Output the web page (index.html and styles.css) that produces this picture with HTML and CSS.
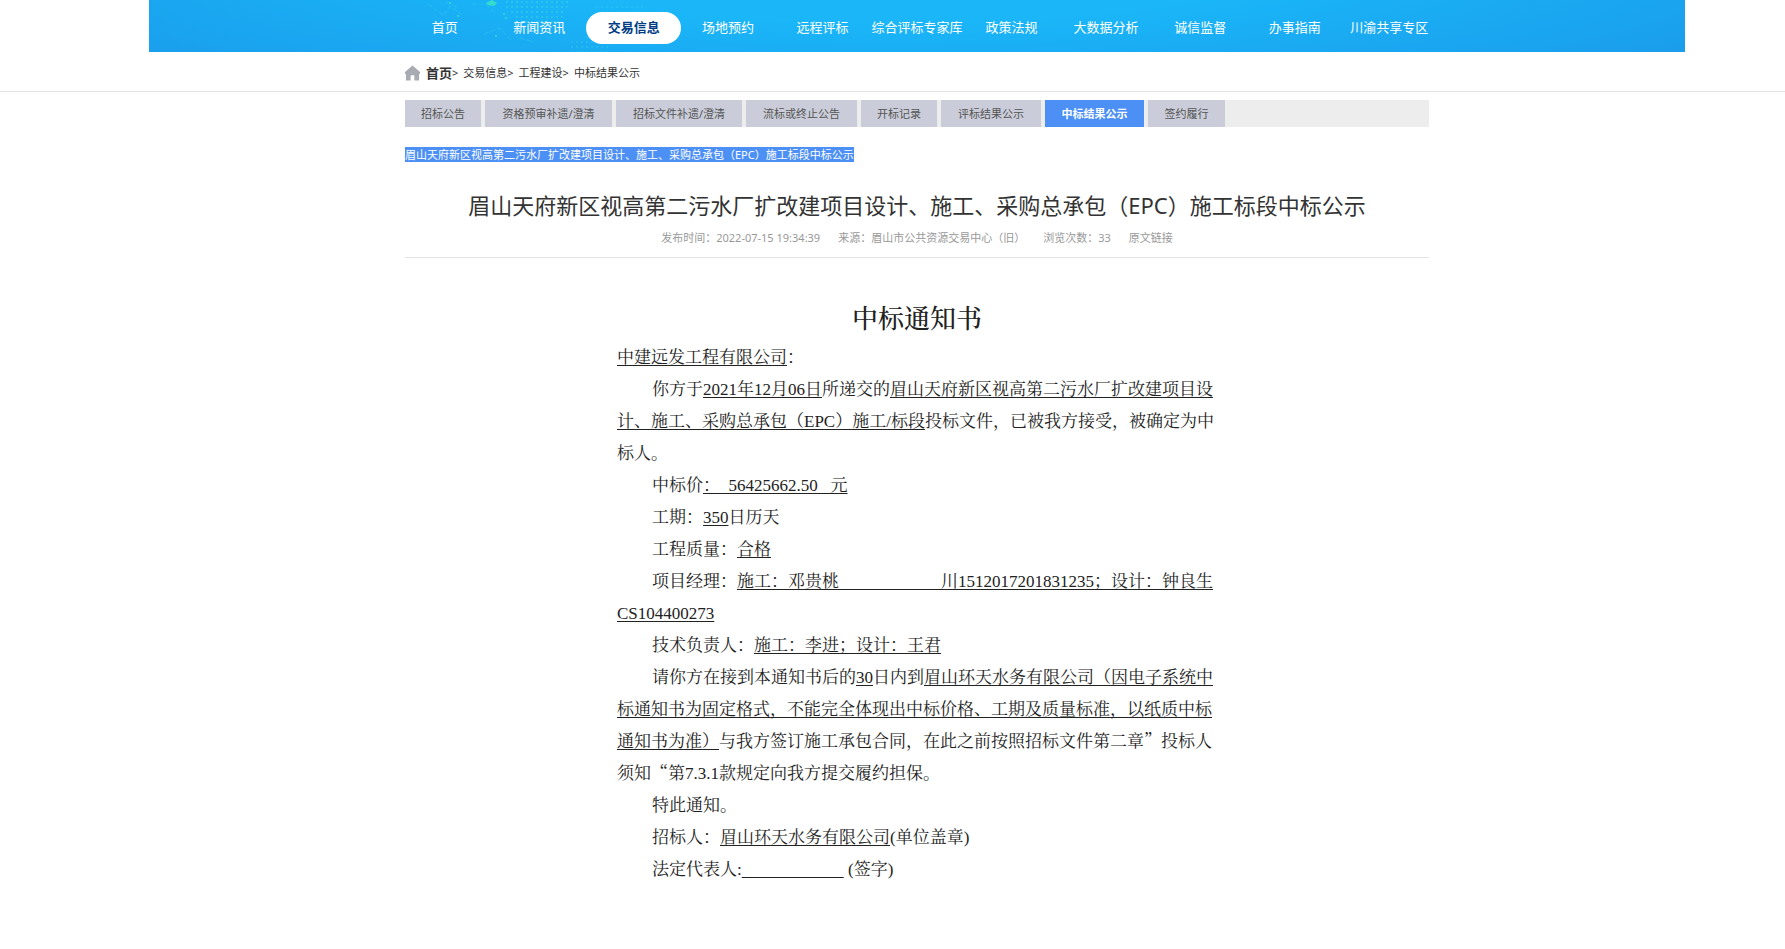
FILE: index.html
```html
<!DOCTYPE html>
<html lang="zh-CN">
<head>
<meta charset="utf-8">
<title>中标结果公示</title>
<link rel="stylesheet" href="styles.css">
</head>
<body>
<header class="banner">
  <svg class="banner-art" viewBox="0 0 300 52" aria-hidden="true">
    <defs>
      <pattern id="dots" width="5" height="5" patternUnits="userSpaceOnUse"><circle cx="2" cy="2" r="1" fill="#2fd0e0"/></pattern>
    </defs>
    <path d="M84 0h66l-4 12-8 12-18 4-18-6-14-8z" fill="url(#dots)" opacity=".8"/>
    <path d="M150 42l20-6 22 4-4 12h-40z" fill="url(#dots)" opacity=".5"/>
    <path d="M172 4l30-2 24 4-6 6h-40z" fill="url(#dots)" opacity=".4"/>
    <g fill="none" stroke="#2fcdea" stroke-width="1" stroke-dasharray="5 2" opacity=".5">
      <path d="M8 4l16 12 6-10 14 10M26 2l12 6M52 4l14 0 10 10M64 34l16-6 12 14M100 38l14 4"/>
    </g>
    <g fill="#35dccb"><path d="M66 3l6-3 5 3-3 3-6-1z"/><circle cx="30" cy="3" r="1"/><circle cx="38" cy="16" r="1"/><circle cx="84" cy="14" r="1"/><circle cx="86" cy="18" r="1"/><circle cx="76" cy="36" r="1"/></g>
  </svg>
  <nav class="nav" aria-label="主导航">
    <a href="#">首页</a>
    <a href="#">新闻资讯</a>
    <a href="#" class="current">交易信息</a>
    <a href="#">场地预约</a>
    <a href="#">远程评标</a>
    <a href="#">综合评标专家库</a>
    <a href="#">政策法规</a>
    <a href="#">大数据分析</a>
    <a href="#">诚信监督</a>
    <a href="#">办事指南</a>
    <a href="#">川渝共享专区</a>
  </nav>
</header>
<div class="crumb-bar">
  <nav class="crumbs wrap" aria-label="当前位置">
    <svg class="home" viewBox="0 0 16 16" aria-hidden="true"><path d="M8 0L0 7v2h1v7h5v-5q2-2 4 0v5h5V9h1V7z" fill="#a9abb3"/></svg>
    <a href="#" class="root">首页</a><span>&gt;</span>
    <a href="#">交易信息</a><span>&gt;</span>
    <a href="#">工程建设</a><span>&gt;</span>
    <a href="#">中标结果公示</a>
  </nav>
</div>
<main>
  <div class="wrap">
    <nav class="tabs" aria-label="公告类型">
      <a href="#">招标公告</a>
      <a href="#">资格预审补遗/澄清</a>
      <a href="#">招标文件补遗/澄清</a>
      <a href="#">流标或终止公告</a>
      <a href="#">开标记录</a>
      <a href="#">评标结果公示</a>
      <a href="#" class="current">中标结果公示</a>
      <a href="#">签约履行</a>
    </nav>
    <p class="project"><mark>眉山天府新区视高第二污水厂扩改建项目设计、施工、采购总承包（EPC）施工标段中标公示</mark></p>
    <article>
      <h1>眉山天府新区视高第二污水厂扩改建项目设计、施工、采购总承包（EPC）施工标段中标公示</h1>
      <div class="meta">
        <span>发布时间：2022-07-15 19:34:39</span>
        <span>来源：眉山市公共资源交易中心（旧）</span>
        <span>浏览次数：33</span>
        <a href="#">原文链接</a>
      </div>
      <section class="notice">
        <h2>中标通知书</h2>
        <p class="flush"><u>中建远发工程有限公司</u>：</p>
        <p>你方于<u>2021年12月06日</u>所递交的<u>眉山天府新区视高第二污水厂扩改建项目设<br>计、施工、采购总承包（EPC）施工/标段</u>投标文件，已被我方接受，被确定为中<br>标人。</p>
        <p>中标价<u>：&nbsp;&nbsp;56425662.50&nbsp;&nbsp; 元</u></p>
        <p>工期：<u>350</u>日历天</p>
        <p>工程质量：<u>合格</u></p>
        <p>项目经理：<u>施工：邓贵桃　　　　　　川1512017201831235；设计：钟良生<br>CS104400273</u></p>
        <p>技术负责人：<u>施工：李进；设计：王君</u></p>
        <p>请你方在接到本通知书后的<u>30</u>日内到<u>眉山环天水务有限公司（因电子系统中<br>标通知书为固定格式，不能完全体现出中标价格、工期及质量标准，以纸质中标<br>通知书为准）</u>与我方签订施工承包合同，在此之前按照招标文件第二章<span class="quote">”</span>投标人<br>须知<span class="quote">“</span>第7.3.1款规定向我方提交履约担保。</p>
        <p>特此通知。</p>
        <p>招标人：<u>眉山环天水务有限公司</u>(单位盖章)</p>
        <p>法定代表人:<u>　　　　　　</u>&nbsp;(签字)</p>
      </section>
    </article>
  </div>
</main>
</body>
</html>
```
FILE: styles.css
```css
* { box-sizing: border-box; }

body {
  margin: 0;
  background: #fff;
  color: #333;
  font: 11px/16px "Noto Sans", "Noto Sans CJK SC", sans-serif;
}

a { color: inherit; text-decoration: none; }

.banner {
  position: relative;
  max-width: 1536px;
  margin: 0 100px 0 149px;
  padding: 12px 0 8px;
  background: radial-gradient(ellipse 60% 260% at 48% -60%, #1ab6f8 40%, #1a98e9 120%);
}

.banner-art {
  position: absolute;
  left: 271px;
  top: 0;
  width: 300px;
  height: 52px;
}

.nav {
  position: relative;
  display: grid;
  grid-template-columns: repeat(11, 1fr);
  max-width: 1039px;
  margin: 0 auto;
}

.nav a {
  padding-bottom: 2px;
  color: #fff;
  font-size: 13px;
  line-height: 30px;
  text-align: center;
  border-radius: 16px;
  white-space: nowrap;
}

.nav .current { background: #fff; color: #003d85; font-weight: 700; }

.crumb-bar {
  padding-left: 49px;
  border-bottom: 1px solid #e3e3e3;
}

main { padding-left: 49px; }

.wrap {
  max-width: 1024px;
  margin: 0 auto;
}

.crumbs { display: flex; align-items: center; padding: 13px 0 10px; }
.home { width: 15px; height: 16px; margin-right: 6px; }
.crumbs span { margin-right: 5px; }
.crumbs .root { font-size: 13px; font-weight: 700; }

.tabs {
  display: grid;
  grid-template-columns: 76px 127px 126px 111px 76px 100px 99px 77px;
  gap: 4px;
  margin-top: 8px;
  background: #ededed;
}

.tabs a {
  background: #cacdd9;
  color: #555;
  line-height: 27px;
  text-align: center;
  white-space: nowrap;
}

.tabs .current { background: #4d90f5; color: #fff; font-weight: 700; }

.project { margin: 20px 0 0; }
.project mark { background: #4d90f5; color: #fff; }

h1 {
  margin: 26px 0 0;
  font-size: 22px;
  font-weight: 400;
  line-height: 32px;
  text-align: center;
}

.meta {
  display: flex;
  justify-content: center;
  gap: 18px;
  padding: 9px 0 11px;
  border-bottom: 1px solid #e3e3e3;
  color: #999;
}

.notice {
  max-width: 600px;
  margin: 42px auto 0;
  color: #222;
  font-family: "Liberation Serif", "Noto Serif CJK SC", "Noto Sans CJK SC", serif;
  font-size: 17px;
  line-height: 32px;
}

.notice h2 {
  margin: 0 0 2px;
  font-size: 26px;
  font-weight: 500;
  line-height: 40px;
  text-align: center;
}

.notice p { margin: 0; text-indent: 35px; white-space: nowrap; }
.notice .flush { text-indent: 0; }
.notice u { text-underline-offset: 2px; text-decoration-thickness: 1px; }
.quote { font-family: "Noto Serif CJK SC", "Noto Sans CJK SC", serif; line-height: 16px; }
```
